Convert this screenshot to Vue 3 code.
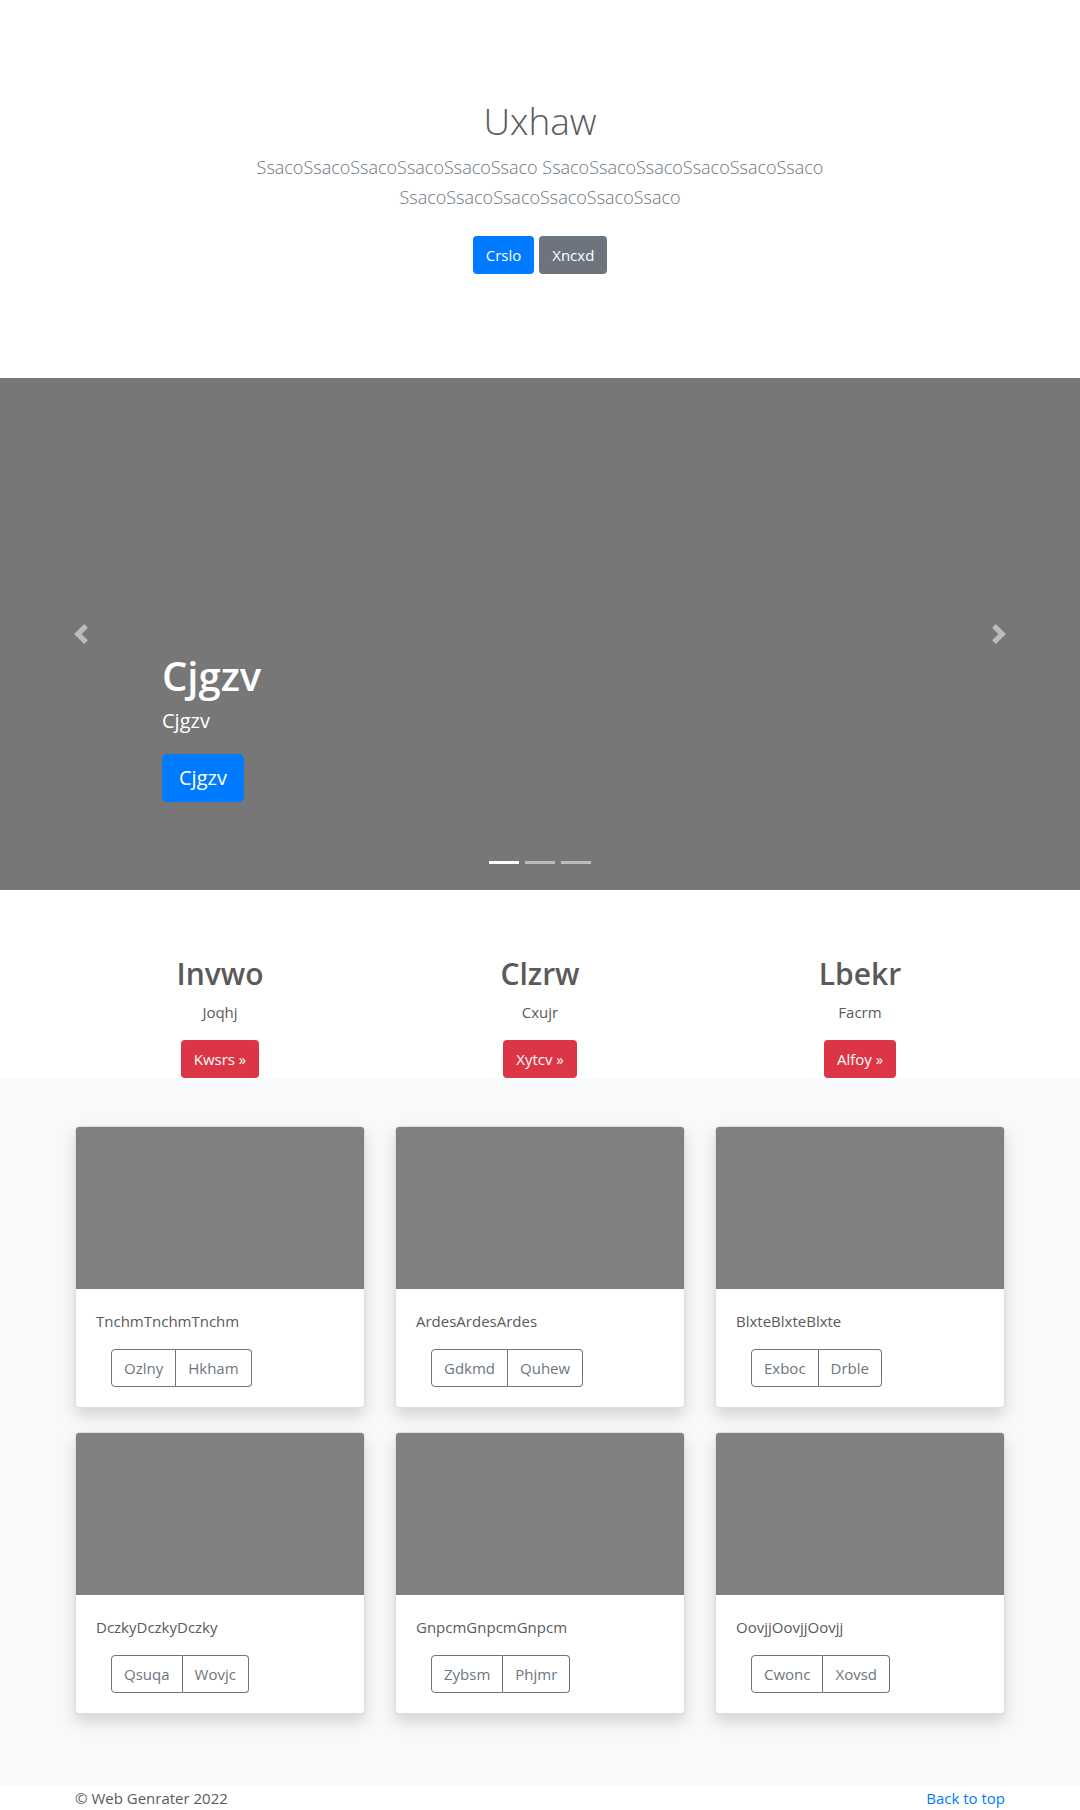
<script setup>
const features = [
  { title: 'Invwo', text: 'Joqhj', action: 'Kwsrs »' },
  { title: 'Clzrw', text: 'Cxujr', action: 'Xytcv »' },
  { title: 'Lbekr', text: 'Facrm', action: 'Alfoy »' },
]

const cards = [
  { text: 'TnchmTnchmTnchm', actions: ['Ozlny', 'Hkham'] },
  { text: 'ArdesArdesArdes', actions: ['Gdkmd', 'Quhew'] },
  { text: 'BlxteBlxteBlxte', actions: ['Exboc', 'Drble'] },
  { text: 'DczkyDczkyDczky', actions: ['Qsuqa', 'Wovjc'] },
  { text: 'GnpcmGnpcmGnpcm', actions: ['Zybsm', 'Phjmr'] },
  { text: 'OovjjOovjjOovjj', actions: ['Cwonc', 'Xovsd'] },
]
</script>

<template>
  <div class="page">
    <main>
      <section class="intro">
        <h1>Uxhaw</h1>
        <p class="lead">
          SsacoSsacoSsacoSsacoSsacoSsaco SsacoSsacoSsacoSsacoSsacoSsaco
          SsacoSsacoSsacoSsacoSsacoSsaco
        </p>
        <div class="intro-actions">
          <a href="#" class="btn primary">Crslo</a>
          <a href="#" class="btn secondary">Xncxd</a>
        </div>
      </section>

      <section class="carousel">
        <button type="button" class="control" aria-label="Previous">
          <svg viewBox="0 0 8 8" width="20" height="20" fill="#fff">
            <path d="M5.25 0l-4 4 4 4 1.5-1.5L4.25 4l2.5-2.5L5.25 0z" />
          </svg>
        </button>
        <div class="slide">
          <div class="caption">
            <h2>Cjgzv</h2>
            <p>Cjgzv</p>
            <a href="#" class="btn primary large">Cjgzv</a>
          </div>
          <div class="indicators">
            <button
              v-for="n in 3"
              :key="n"
              type="button"
              :class="{ active: n === 1 }"
              :aria-label="`Slide ${n}`"
            ></button>
          </div>
        </div>
        <button type="button" class="control" aria-label="Next">
          <svg viewBox="0 0 8 8" width="20" height="20" fill="#fff">
            <path d="M2.75 0l-1.5 1.5L3.75 4l-2.5 2.5L2.75 8l4-4-4-4z" />
          </svg>
        </button>
      </section>

      <section class="container features">
        <div v-for="item in features" :key="item.title" class="feature">
          <h2>{{ item.title }}</h2>
          <p>{{ item.text }}</p>
          <a href="#" class="btn danger">{{ item.action }}</a>
        </div>
      </section>

      <section class="album">
        <div class="container cards">
          <article v-for="card in cards" :key="card.text" class="card">
            <div class="thumb"></div>
            <div class="card-body">
              <p>{{ card.text }}</p>
              <div class="group">
                <button v-for="a in card.actions" :key="a" type="button" class="btn outline">{{ a }}</button>
              </div>
            </div>
          </article>
        </div>
      </section>
    </main>

    <footer class="container footer">
      <span>© Web Genrater 2022</span>
      <a href="#">Back to top</a>
    </footer>
  </div>
</template>

<style>
body {
  margin: 0;
  background: #fff;
}
</style>

<style scoped>
.page {
  font-family: "Segoe UI", "Open Sans", "Noto Sans", sans-serif;
  font-size: 15px;
  line-height: 24px;
  color: #5a5a5a;
}

.page *,
.page *::before {
  box-sizing: border-box;
}

h1,
h2,
p {
  margin: 0;
}

.container {
  max-width: 960px;
  margin: 0 auto;
  padding: 0 15px;
}

.btn {
  display: inline-block;
  padding: 6px 12px;
  border: 1px solid transparent;
  border-radius: 4px;
  font-family: inherit;
  font-size: 15px;
  line-height: 24px;
  color: #fff;
  text-decoration: none;
  cursor: pointer;
}

.primary {
  background: #007bff;
}

.secondary {
  background: #6c757d;
}

.danger {
  background: #dc3545;
}

.large {
  padding: 8px 16px;
  border-radius: 5px;
  font-size: 20px;
  line-height: 30px;
}

.intro {
  padding: 96px 15px 104px;
  text-align: center;
}

.intro h1 {
  margin-bottom: 6px;
  font-size: 37px;
  font-weight: 300;
  line-height: 50px;
}

.lead {
  max-width: 610px;
  margin: 0 auto 24px;
  font-size: 18px;
  font-weight: 300;
  line-height: 30px;
  color: #6c757d;
}

.intro-actions {
  display: flex;
  justify-content: center;
  gap: 5px;
}

.carousel {
  display: flex;
  height: 512px;
  background: #777;
}

.control {
  display: flex;
  flex: 0 0 15%;
  align-items: center;
  justify-content: center;
  padding: 0;
  border: 0;
  background: none;
  opacity: 0.5;
  cursor: pointer;
}

.slide {
  display: flex;
  flex: 1;
  flex-direction: column;
  justify-content: flex-end;
  color: #fff;
}

.caption h2 {
  margin-bottom: 6px;
  font-size: 40px;
  font-weight: 600;
  line-height: 48px;
}

.caption p {
  margin-bottom: 18px;
  font-size: 20px;
  line-height: 30px;
}

.caption .btn {
  vertical-align: top;
}

.indicators {
  display: flex;
  justify-content: center;
  gap: 6px;
  padding: 59px 0 26px;
}

.indicators button {
  width: 30px;
  height: 3px;
  padding: 0;
  border: 0;
  background: #fff;
  opacity: 0.5;
}

.indicators .active {
  opacity: 1;
}

.features {
  display: grid;
  grid-template-columns: repeat(3, 1fr);
  gap: 30px;
  padding-top: 64px;
  text-align: center;
}

.feature h2 {
  margin-bottom: 6px;
  font-size: 30px;
  font-weight: 600;
  line-height: 40px;
}

.feature p {
  margin-bottom: 16px;
}

.feature .btn {
  vertical-align: top;
}

.album {
  padding: 48px 0 72px;
  background: #f8f9fb;
}

.cards {
  display: grid;
  grid-template-columns: repeat(3, 1fr);
  gap: 24px 30px;
}

.card {
  overflow: hidden;
  border: 1px solid rgba(0, 0, 0, 0.125);
  border-radius: 4px;
  background: #fff;
  box-shadow: 0 8px 16px rgba(0, 0, 0, 0.15);
}

.thumb {
  height: 162px;
  background: #808080;
}

.card-body {
  padding: 20px;
}

.card-body p {
  margin-bottom: 16px;
}

.group {
  display: flex;
  padding-left: 15px;
}

.outline {
  border-color: #6c757d;
  background: transparent;
  color: #6c757d;
}

.outline:first-child {
  border-radius: 4px 0 0 4px;
}

.outline:last-child {
  border-left: 0;
  border-radius: 0 4px 4px 0;
}

.footer {
  display: flex;
  justify-content: space-between;
}

.footer a {
  color: #007bff;
  text-decoration: none;
}
</style>
